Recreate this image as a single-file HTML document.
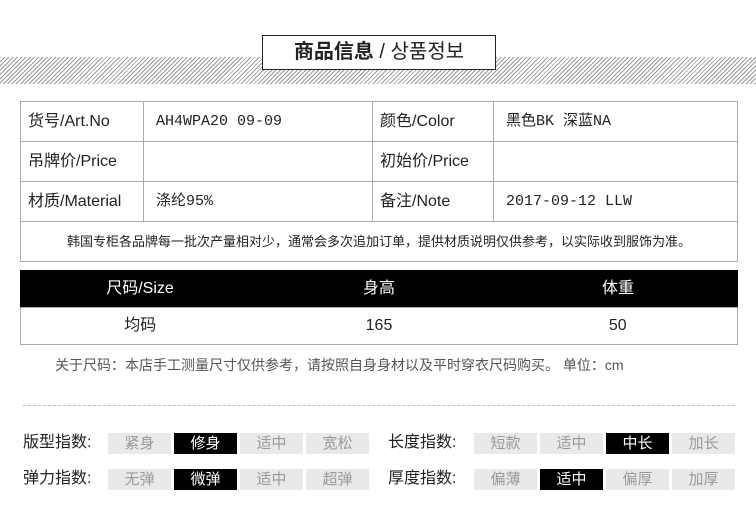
<!DOCTYPE html>
<html><head><meta charset="utf-8"><style>
*{margin:0;padding:0;box-sizing:border-box}
body{width:756px;height:529px;background:#fff;position:relative;overflow:hidden;font-family:"Liberation Sans","Noto Sans CJK SC",sans-serif;color:#222}
.a{position:absolute}
.hatch{left:0;top:57px;width:756px;height:27px;background:repeating-linear-gradient(135deg,#999 0 1px,#fff 1px 3px)}
.title{left:262px;top:35px;width:234px;height:35px;border:1.5px solid #222;background:#fff;text-align:center;font-size:20px;line-height:32px}
table{border-collapse:collapse;position:absolute}
.t1{left:20px;top:101px;width:718px}
.t1 td{border:1.5px solid #aaa;height:40px;font-size:16px;padding-left:7px;color:#222;line-height:18px}
.mono{font-family:"Liberation Mono","Noto Sans CJK SC",monospace;font-size:15px!important;padding-left:12px!important}
.t2{left:20px;top:270px;width:718px}
.t2 td{text-align:center;font-size:16px;width:33.3%;line-height:18px}
.t2 tr.h td{background:#000;color:#fff;height:37px;border:1.5px solid #000;border-bottom-color:#aaa}
.t2 tr.r td{height:37px;border-top:1.5px solid #aaa;border-bottom:1.5px solid #aaa}
.t2 tr.r td:first-child{border-left:1.5px solid #aaa}
.t2 tr.r td:last-child{border-right:1.5px solid #aaa}
.lab{font-size:16px;color:#222;line-height:21px}
.b{width:63px;height:21px;background:#e9e9e9;color:#999;font-size:15px;text-align:center;line-height:21px}
.on{background:#000;color:#fff}
</style></head><body>
<div class="a hatch"></div>
<div class="a title"><b>商品信息</b> / 상품정보</div>
<table class="t1">
<tr><td style="width:123px">货号/Art.No</td><td class="mono" style="width:229px">AH4WPA20 09-09</td><td style="width:121px">颜色/Color</td><td class="mono">黑色BK 深蓝NA</td></tr>
<tr><td>吊牌价/Price</td><td></td><td>初始价/Price</td><td></td></tr>
<tr><td>材质/Material</td><td class="mono">涤纶95%</td><td>备注/Note</td><td class="mono">2017-09-12 LLW</td></tr>
<tr><td colspan="4" style="text-align:center;font-size:13px;padding:0">韩国专柜各品牌每一批次产量相对少，通常会多次追加订单，提供材质说明仅供参考，以实际收到服饰为准。</td></tr>
</table>
<table class="t2">
<tr class="h"><td>尺码/Size</td><td>身高</td><td>体重</td></tr>
<tr class="r"><td>均码</td><td>165</td><td>50</td></tr>
</table>
<div class="a" style="left:55px;top:356px;font-size:14px;color:#555;line-height:18px">关于尺码：本店手工测量尺寸仅供参考，请按照自身身材以及平时穿衣尺码购买。 单位：cm</div>
<div class="a" style="left:23px;top:405px;width:712px;border-top:1px dashed #bbb"></div>

<div class="a lab" style="left:23px;top:432px">版型指数:</div>
<div class="a b" style="left:108px;top:433px">紧身</div>
<div class="a b on" style="left:174px;top:433px">修身</div>
<div class="a b" style="left:240px;top:433px">适中</div>
<div class="a b" style="left:306px;top:433px">宽松</div>
<div class="a lab" style="left:388px;top:432px">长度指数:</div>
<div class="a b" style="left:474px;top:433px">短款</div>
<div class="a b" style="left:540px;top:433px">适中</div>
<div class="a b on" style="left:606px;top:433px">中长</div>
<div class="a b" style="left:672px;top:433px">加长</div>

<div class="a lab" style="left:23px;top:468px">弹力指数:</div>
<div class="a b" style="left:108px;top:469px">无弹</div>
<div class="a b on" style="left:174px;top:469px">微弹</div>
<div class="a b" style="left:240px;top:469px">适中</div>
<div class="a b" style="left:306px;top:469px">超弹</div>
<div class="a lab" style="left:388px;top:468px">厚度指数:</div>
<div class="a b" style="left:474px;top:469px">偏薄</div>
<div class="a b on" style="left:540px;top:469px">适中</div>
<div class="a b" style="left:606px;top:469px">偏厚</div>
<div class="a b" style="left:672px;top:469px">加厚</div>
</body></html>
